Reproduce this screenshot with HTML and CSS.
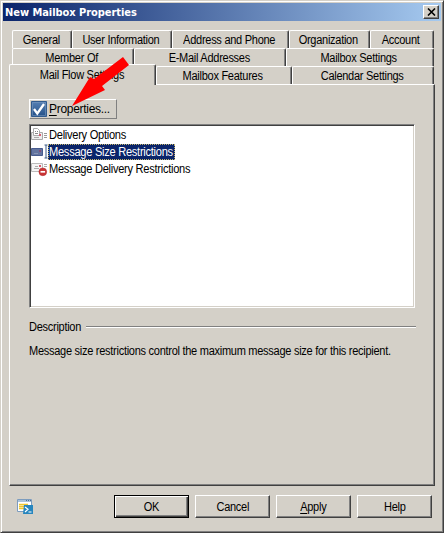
FILE: index.html
```html
<!DOCTYPE html>
<html lang="en">
<head>
<meta charset="utf-8">
<title>New Mailbox Properties</title>
<link rel="stylesheet" href="styles.css">
</head>
<body>
<main class="window">
  <header class="titlebar">
    <h1>New Mailbox Properties</h1>
    <button class="close" aria-label="Close"><svg width="9" height="8" viewBox="0 0 9 8"><path d="M1 .5 8 7.5M8 .5 1 7.5" stroke="#000" stroke-width="1.6"/></svg></button>
  </header>
  <nav class="tabs">
    <div class="row row-a"><div class="tab"><span>General</span></div><div class="tab"><span>User Information</span></div><div class="tab"><span>Address and Phone</span></div><div class="tab"><span>Organization</span></div><div class="tab"><span>Account</span></div></div>
    <div class="row row-b"><div class="tab"><span>Member Of</span></div><div class="tab"><span>E-Mail Addresses</span></div><div class="tab"><span>Mailbox Settings</span></div></div>
    <div class="row row-c"><div class="tab selected"><span>Mail Flow Settings</span></div><div class="tab"><span>Mailbox Features</span></div><div class="tab"><span>Calendar Settings</span></div></div>
  </nav>
  <section class="panel">
    <button class="tool">
      <svg width="16" height="16" viewBox="0 0 16 16"><defs><linearGradient id="blue" x2="0" y2="1"><stop stop-color="#5680b4"/><stop offset="1" stop-color="#245087"/></linearGradient></defs><path d="M.5.5h15v15H.5z" fill="url(#blue)" stroke="#315b8e"/><path d="M1.5 1.5h13v13h-13z" fill="none" stroke="#7899bf" stroke-width=".6"/><path d="m3 8 3.3 4.5L13 3" fill="none" stroke="#fff" stroke-width="2.3"/></svg>
      <span class="props"><u>P</u>roperties...</span>
    </button>
    <ul class="list">
      <li>
        <svg width="17" height="16" viewBox="0 0 17 16"><path d="M.5 5.5h11v7H.5z" fill="#eee" stroke="#aaa"/><path d="M2.5 1.5h4l2 2v5h-6z" fill="#fff" stroke="#aaa"/><path d="M4 4.5h1M6 4.5h1M4 6.5h3" stroke="#888"/><path d="M8 7h2v2H8z" fill="#d75b6b"/><path d="M3 10.5h5" stroke="#aaa"/><path d="M13 6.5h3M13 8.5h3M13 10.5h3" stroke="#999" stroke-width="1"/></svg>
        <div class="item"><span>Delivery Options</span></div>
      </li>
      <li class="active">
        <svg width="17" height="16" viewBox="0 0 17 16"><path d="M.5 4.5h11v7H.5z" fill="#64759f" stroke="#475b8e"/><path d="M3 9.5h4" stroke="#8794b5"/><path d="M8 6h2v2H8z" fill="#854f79"/><path d="M13.5 1h3M13.5 14h3M15 1v13" stroke="#3d5c89"/></svg>
        <div class="item"><span>Message Size Restrictions</span></div>
      </li>
      <li>
        <svg width="17" height="16" viewBox="0 0 17 16"><path d="M.5 2.5h11v8H.5z" fill="#f5f5f5" stroke="#bbb"/><path d="M3 7.5h5M4 5.5h3M13 3.5h3M13 5.5h3" stroke="#aaa"/><path d="M8 4h2v2H8z" fill="#d75b6b"/><circle cx="11.8" cy="10.8" r="3.9" fill="#c93434" stroke="#b3292d" stroke-width=".5"/><path d="M9.5 10.8h4.6" stroke="#fff" stroke-width="1.7"/></svg>
        <div class="item"><span>Message Delivery Restrictions</span></div>
      </li>
    </ul>
    <div class="heading"><span>Description</span><i></i></div>
    <p><span>Message size restrictions control the maximum message size for this recipient.</span></p>
  </section>
  <footer>
    <svg class="shell" width="17" height="17" viewBox="0 0 17 17"><path d="M.5 1.5h14v12H.5z" fill="#fff" stroke="#7c9cbe"/><path d="M1 2h13v2H1z" fill="#a9c2da"/><path d="M9 2.5h1M11 2.5h1M13 2.5h1" stroke="#4f6e91"/><path d="M2 6.5h9M2 8.5h7M2 10.5h5" stroke="#edc62e" stroke-width="1.4"/><path d="M7 7h9v9H6z" fill="#2786be"/><path d="m8 9 3 2.3L8 14M11.5 14h3" fill="none" stroke="#fff" stroke-width="1.2"/></svg>
    <button class="push default"><span>OK</span></button><button class="push"><span>Cancel</span></button><button class="push"><span><u>A</u>pply</span></button><button class="push"><span>Help</span></button>
  </footer>
  <svg class="arrow" width="60" height="52" viewBox="0 0 60 52"><path d="M51 0 57 8 30 29 33 33 0 49 18 20 22 22Z" fill="#f00"/></svg>
</main>
</body>
</html>
```
FILE: styles.css
```css
* { box-sizing: border-box; }
body { margin: 0; background: #d4d0c8; color: #000; font: 12px/14px "Liberation Sans", sans-serif; letter-spacing: -.3px; }
button { font: inherit; letter-spacing: inherit; color: inherit; padding: 0; margin: 0; border: 0; border-radius: 0; background: #d4d0c8; }
svg { display: block; flex: none; }
span { display: inline-block; white-space: nowrap; transform: scaleX(.918); }
.window { position: relative; width: 444px; height: 533px; padding: 2px 2px 0; background: #d4d0c8; border: 1px solid; border-color: #d4d0c8 #404040 #404040 #d4d0c8; box-shadow: inset 1px 1px #fff, inset -1px -1px #808080; }
.titlebar { height: 18px; display: flex; align-items: center; justify-content: space-between; padding: 0 2px; background: linear-gradient(90deg, #0a246a, #a6caf0); }
h1 { margin: 0; padding-top: 1px; color: #fff; font: bold 11px/15px "DejaVu Sans Condensed", "DejaVu Sans", sans-serif; letter-spacing: -.05px; }
.close { width: 16px; height: 14px; display: grid; place-items: center; border: 1px solid; border-color: #fff #404040 #404040 #fff; box-shadow: inset -1px -1px #808080; }
.tabs { margin: 9px 7px 0 9px; }
.row { display: grid; height: 18px; grid-template-rows: 18px; }
.row-a { grid-template-columns: 60px 100px 117px 81px 64px; }
.row-b { grid-template-columns: 122px 152px 148px; }
.row-c { grid-template-columns: 144px 136px 142px; }
.tab { display: flex; justify-content: center; align-items: center; padding: 0 2px 0 0; border: 1px solid; border-color: #fff #404040 transparent #fff; border-bottom: 0; border-radius: 2px 2px 0 0; box-shadow: inset -1px 0 #808080; background: #d4d0c8; }
.selected { position: relative; margin: -2px 0 -1px -3px; z-index: 1; }
.panel { margin: 0 6px; height: 402px; padding: 14px 18px 0 19px; border: 1px solid; border-color: #fff #404040 #404040 #fff; box-shadow: inset -1px -1px #808080; }
.tool { width: 88px; height: 20px; display: flex; align-items: center; gap: 2px; padding-left: 1px; border: 1px solid; border-color: #fff #808080 #808080 #fff; }
.props { transform: none; }
.list { list-style: none; margin: 5px 0 0; padding: 1px 0 0 1px; width: 386px; height: 184px; background: #fff; border: 1px solid; border-color: #808080 #fff #fff #808080; box-shadow: inset 1px 1px #404040, inset -1px -1px #d4d0c8; }
li { display: flex; height: 17px; align-items: center; }
.item { height: 16px; line-height: 17px; padding-left: 1px; }
.item span, .heading span, p span { transform-origin: left; }
.item span { transform: scaleX(.925); }
.active .item { width: 127px; color: #fff; background: #0a246a; outline: 1px dotted #c2b36c; outline-offset: -1px; }
.heading { display: flex; align-items: center; height: 16px; margin-top: 11px; }
.heading i { flex: 1; height: 2px; border-top: 1px solid #808080; border-bottom: 1px solid #fff; }
p { margin: 9px 0 0; }
footer { display: flex; align-items: flex-start; margin: 9px 0 0 14px; }
.shell { margin: 3px 80px 0 0; }
.push { width: 75px; height: 23px; margin-right: 6px; border: 1px solid; border-color: #fff #404040 #404040 #fff; box-shadow: inset -1px -1px #808080; line-height: 20px; }
.default { border-color: #000; box-shadow: inset 1px 1px #fff, inset -1px -1px #404040, inset -2px -2px #808080; }
u { text-underline-offset: 2px; }
.arrow { position: absolute; z-index: 2; left: 71px; top: 56px; }
```
